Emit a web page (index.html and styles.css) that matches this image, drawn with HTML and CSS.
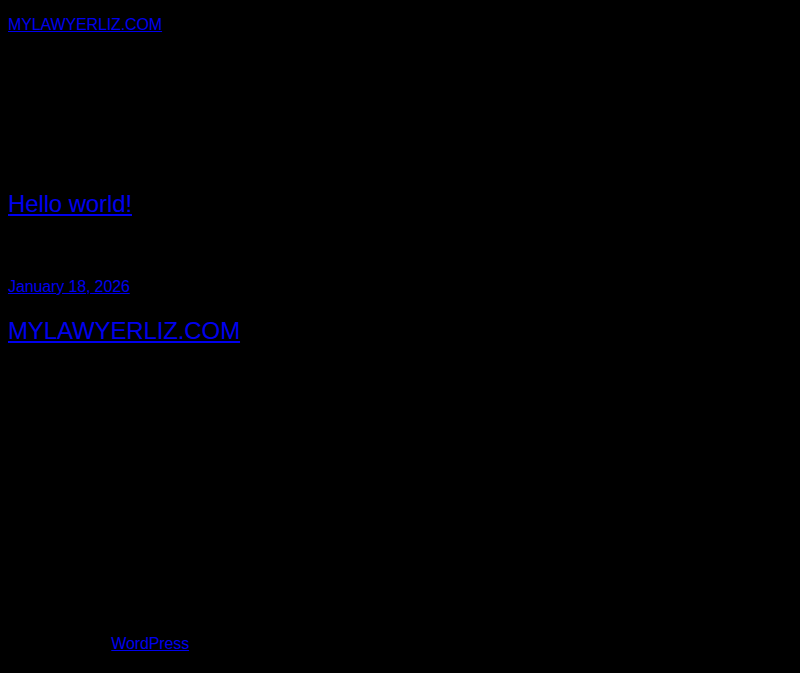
FILE: index.html
```html
<!DOCTYPE html>
<html lang="en">
<head>
<meta charset="utf-8">
<title>MYLAWYERLIZ.COM</title>
<link rel="stylesheet" href="styles.css">
</head>
<body>
<header class="site-header">
  <p class="site-title"><a href="#">MYLAWYERLIZ.COM</a></p>
</header>
<main class="site-main">
  <h2 class="post-title"><a href="#">Hello world!</a></h2>
  <div class="post-date"><a href="#">January 18, 2026</a></div>
  <h2 class="site-title-lg"><a href="#">MYLAWYERLIZ.COM</a></h2>
</main>
<footer class="site-footer">
  <p class="credit">Designed with <a href="#">WordPress</a></p>
</footer>
</body>
</html>
```

FILE: styles.css
```css
html, body {
  background: #000;
}
body {
  margin: 0;
  padding: 0 8px;
  color: #000;
  font-family: "Liberation Sans", Arial, sans-serif;
  font-size: 16px;
  letter-spacing: -0.12px;
}
a {
  color: #0000ee;
  text-decoration: underline;
}
.site-header {
  padding-top: 16px;
}
.site-title {
  margin: 0;
  line-height: 18px;
}
.site-main {
  margin: 0;
}
.post-title {
  margin: 156px 0 0;
  font-size: 24px;
  font-weight: normal;
  line-height: 28px;
}
.post-date {
  margin-top: 60px;
  line-height: 18px;
}
.site-title-lg {
  margin: 21px 0 0;
  font-size: 24px;
  font-weight: normal;
  line-height: 28px;
}
.site-footer {
  margin-top: 290px;
}
.credit {
  margin: 0;
  line-height: 18px;
}
```
